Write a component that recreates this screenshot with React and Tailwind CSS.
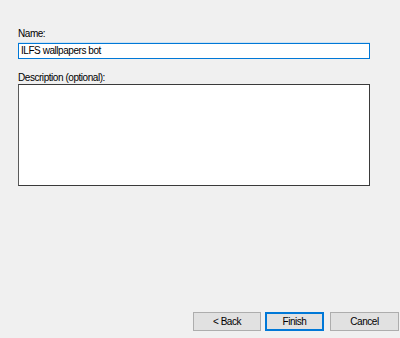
export default function App() {
  const font = { fontFamily: '"Liberation Sans", Arial, sans-serif' };
  return (
    <div
      className="w-[400px] h-[338px] bg-[#f0f0f0] flex flex-col text-[#000] text-[10px] tracking-[-0.45px]"
      style={font}
    >
      <div className="pl-[18px] pr-[30px] pt-[28px] flex flex-col">
        <div className="h-[12px] leading-[12px]">Name:</div>
        <div className="mt-[3px] h-[16px] border border-[#0078d7] bg-white shadow-[0_-1px_0_#cfe3f2] flex items-center pl-[2px] leading-[12px]">
          ILFS wallpapers bot
        </div>
        <div className="mt-[13px] h-[12px] leading-[12px]">Description (optional):</div>
        <div className="h-[102px] border border-[#3a3a3a] border-l-[#5a5a5a] bg-white"></div>
      </div>
      <div className="mt-auto pb-[7px] flex items-center">
        <div className="ml-[193px] w-[68px] h-[19px] border border-[#adadad] bg-[#e1e1e1] flex items-center justify-center leading-[12px]">
          &lt; Back
        </div>
        <div className="ml-[4px] w-[59px] h-[19px] border-2 border-[#0078d7] bg-[#e1e1e1] flex items-center justify-center leading-[12px]">
          Finish
        </div>
        <div className="ml-[6px] w-[69px] h-[19px] border border-[#adadad] bg-[#e1e1e1] flex items-center justify-center leading-[12px]">
          Cancel
        </div>
      </div>
    </div>
  );
}
